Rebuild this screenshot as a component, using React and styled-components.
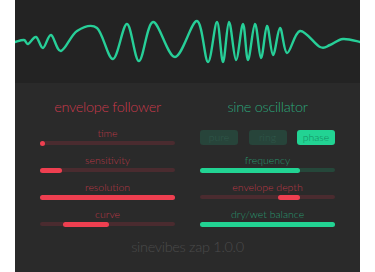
import styled, { createGlobalStyle } from "styled-components";

const GlobalStyle = createGlobalStyle`
  body {
    margin: 0;
    background: #ffffff;
    font-family: "Lato", "Liberation Sans", sans-serif;
  }
`;

const RED = "#ee3f50";
const GREEN = "#22d393";

const Plugin = styled.div`
  width: 345px;
  height: 272px;
  margin: 0 auto;
  display: flex;
  flex-direction: column;
  background: #2a2a2a;
`;

const Scope = styled.div`
  height: 83px;
  background: #232323;
  display: flex;
`;

const Panel = styled.div`
  flex: 1;
  display: flex;
  flex-direction: column;
  align-items: center;
  padding-top: 14px;
`;

const Columns = styled.div`
  display: grid;
  grid-template-columns: 135px 135px;
  column-gap: 25px;
`;

const Column = styled.div`
  display: flex;
  flex-direction: column;
  align-items: stretch;
`;

const Heading = styled.div`
  height: 20px;
  line-height: 20px;
  text-align: center;
  font-size: 14.5px;
  font-weight: 300;
  letter-spacing: -0.3px;
  color: ${(p) => (p.$green ? "#2aa67b" : "#c9394b")};
  margin-bottom: 9px;
`;

const Rows = styled.div`
  display: flex;
  flex-direction: column;
  gap: 7px;
`;

const Row = styled.div`
  height: 20px;
  display: flex;
  flex-direction: column;
`;

const Label = styled.div`
  height: 14px;
  line-height: 14px;
  text-align: center;
  font-size: 10.5px;
  font-weight: 300;
  color: ${(p) => (p.$green ? "#29976f" : "#b93846")};
`;

const Track = styled.div`
  position: relative;
  margin-top: 1px;
  height: 4px;
  border-radius: 2px;
  background: ${(p) => (p.$green ? "#25473a" : "#4a2b2f")};
`;

const Fill = styled.div`
  position: absolute;
  top: -0.5px;
  height: 5px;
  min-width: 5px;
  border-radius: 3px;
  background: ${(p) => (p.$green ? GREEN : RED)};
`;

const ButtonRow = styled.div`
  height: 20px;
  padding-top: 4px;
  box-sizing: border-box;
  display: flex;
  justify-content: space-between;
`;

const ModeButton = styled.div`
  width: 38px;
  height: 15px;
  border-radius: 3px;
  font-size: 10.5px;
  font-weight: 300;
  line-height: 15px;
  text-align: center;
  background: ${(p) => (p.$active ? GREEN : "#27443a")};
  color: ${(p) => (p.$active ? "#148a5f" : "#30594a")};
`;

const Footer = styled.div`
  margin-top: 11px;
  line-height: 18px;
  font-size: 14.5px;
  font-weight: 300;
  color: #4a4a4a;
  letter-spacing: -0.3px;
`;

const wavePoints = [
  [0, 42], [9, 40], [13, 44], [21, 37], [28, 48], [36, 35], [46, 51],
  [62, 31], [82, 28], [98, 59], [112, 24], [124, 61], [138, 22], [160, 57],
  [182, 21], [193, 62], [202, 22], [208, 62], [214, 22], [221, 60], [228, 24],
  [233, 60], [240, 24], [246, 58], [252, 26], [258, 55], [265, 28], [272, 53],
  [285, 31], [305, 47], [315, 45], [328, 39], [345, 42],
];

// catmull-rom -> bezier
const toPath = (pts) => {
  let d = `M${pts[0][0]},${pts[0][1]}`;
  for (let i = 0; i < pts.length - 1; i++) {
    const p0 = pts[i - 1] || pts[i];
    const p1 = pts[i];
    const p2 = pts[i + 1];
    const p3 = pts[i + 2] || p2;
    const c1x = p1[0] + (p2[0] - p0[0]) / 6;
    const c1y = p1[1] + (p2[1] - p0[1]) / 6;
    const c2x = p2[0] - (p3[0] - p1[0]) / 6;
    const c2y = p2[1] - (p3[1] - p1[1]) / 6;
    d += ` C${c1x.toFixed(1)},${c1y.toFixed(1)} ${c2x.toFixed(1)},${c2y.toFixed(1)} ${p2[0]},${p2[1]}`;
  }
  return d;
};

const Slider = ({ label, from = 0, to, green }) => (
  <Row>
    <Label $green={green}>{label}</Label>
    <Track $green={green}>
      <Fill $green={green} style={{ left: `${from}%`, width: `${to - from}%` }} />
    </Track>
  </Row>
);

const App = () => {
  return (
    <>
      <GlobalStyle />
      <Plugin>
        <Scope>
          <svg width="345" height="83" viewBox="0 0 345 83">
            <path d={toPath(wavePoints)} fill="none" stroke="#27cf98" strokeWidth="2.4" strokeLinecap="round" />
          </svg>
        </Scope>
        <Panel>
          <Columns>
            <Column>
              <Heading>envelope follower</Heading>
              <Rows>
                <Slider label="time" to={0} />
                <Slider label="sensitivity" to={16} />
                <Slider label="resolution" to={100} />
                <Slider label="curve" from={17} to={51} />
              </Rows>
            </Column>
            <Column>
              <Heading $green>sine oscillator</Heading>
              <Rows>
                <ButtonRow>
                  <ModeButton>pure</ModeButton>
                  <ModeButton>ring</ModeButton>
                  <ModeButton $active>phase</ModeButton>
                </ButtonRow>
                <Slider green label="frequency" to={74} />
                <Slider label="envelope depth" from={58} to={74} />
                <Slider green label="dry/wet balance" to={100} />
              </Rows>
            </Column>
          </Columns>
          <Footer>sinevibes zap 1.0.0</Footer>
        </Panel>
      </Plugin>
    </>
  );
};

export default App;
